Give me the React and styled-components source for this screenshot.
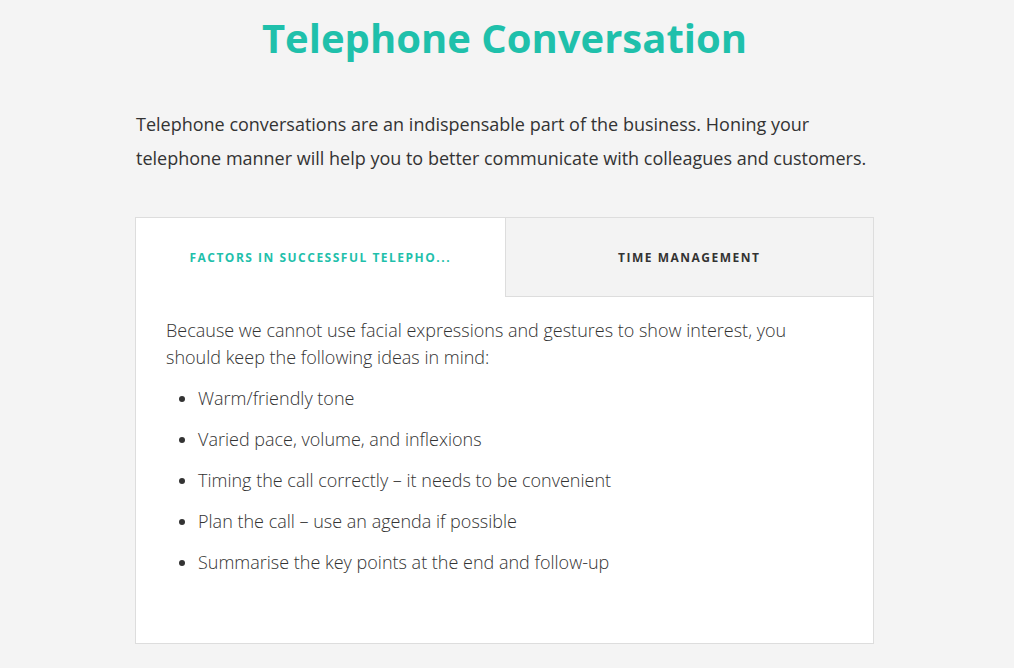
import React, { useState } from "react";
import styled, { createGlobalStyle } from "styled-components";

const Global = createGlobalStyle`
  html, body { margin: 0; padding: 0; background: #f4f4f4; }
  body { font-family: "Open Sans", "Noto Sans", sans-serif; color: #333; padding-right: 5px; }
`;

const Page = styled.div`
  width: 739px;
  margin: 0 auto;
  padding: 10px 0 24px;
`;

const Title = styled.h1`
  margin: 0;
  text-align: center;
  font-size: 40px;
  font-weight: 700;
  line-height: 56px;
  color: #1fc0ab;
`;

const Intro = styled.p`
  margin: 41px 0 42px 1px;
  font-size: 18px;
  line-height: 34px;
  color: #333;
`;

const Card = styled.div`
  background: #fff;
  border: 1px solid #ddd;
`;

const Tabs = styled.div`
  display: grid;
  grid-template-columns: 1fr 1fr;
`;

const Tab = styled.button`
  height: 79px;
  border: none;
  border-bottom: 1px solid ${(p) => (p.$active ? "transparent" : "#ddd")};
  border-left: ${(p) => (p.$first ? "none" : "1px solid #ddd")};
  background: ${(p) => (p.$active ? "#fff" : "#f3f3f3")};
  color: ${(p) => (p.$active ? "#1fc0ab" : "#333")};
  font-family: "Open Sans", sans-serif;
  font-size: 12px;
  font-weight: 700;
  letter-spacing: 1.5px;
  text-transform: uppercase;
  padding: 0 30px;
  white-space: nowrap;
  overflow: hidden;
  text-overflow: ellipsis;
  cursor: pointer;
  min-width: 0;
`;

const Body = styled.div`
  padding: 20px 30px 53px;
  font-weight: 300;
  font-size: 18px;
  color: #333;
`;

const Lead = styled.p`
  margin: 0 0 14px;
  line-height: 27px;
`;

const List = styled.ul`
  margin: 0;
  padding-left: 32px;
`;

const Item = styled.li`
  line-height: 27px;
  margin-bottom: 14px;
`;

const items = [
  "Warm/friendly tone",
  "Varied pace, volume, and inflexions",
  "Timing the call correctly \u2013 it needs to be convenient",
  "Plan the call \u2013 use an agenda if possible",
  "Summarise the key points at the end and follow-up",
];

export default function App() {
  const [active, setActive] = useState(0);
  return (
    <>
      <Global />
      <Page>
        <Title>Telephone Conversation</Title>
        <Intro>
          Telephone conversations are an indispensable part of the business. Honing your
          telephone manner will help you to better communicate with colleagues and customers.
        </Intro>
        <Card>
          <Tabs>
            <Tab $first $active={active === 0} onClick={() => setActive(0)}>
              Factors in successful telepho...
            </Tab>
            <Tab $active={active === 1} onClick={() => setActive(1)}>
              Time management
            </Tab>
          </Tabs>
          <Body>
            <Lead>
              Because we cannot use facial expressions and gestures to show interest, you
              should keep the following ideas in mind:
            </Lead>
            <List>
              {items.map((t) => (
                <Item key={t}>{t}</Item>
              ))}
            </List>
          </Body>
        </Card>
      </Page>
    </>
  );
}
